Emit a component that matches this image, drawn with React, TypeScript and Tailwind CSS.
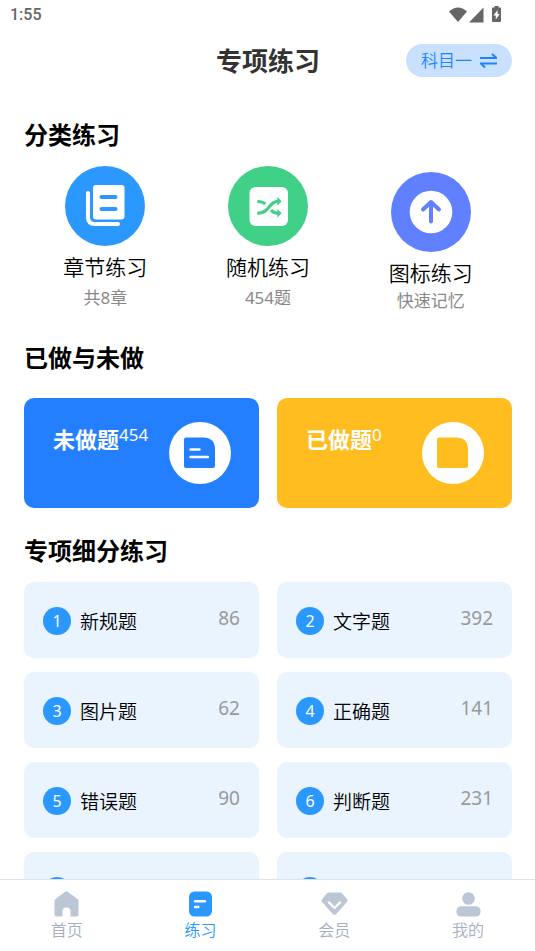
import type { ReactNode } from "react";

type Category = { title: string; note: string; noteClass: string; icon: ReactNode };
type Topic = { id: number; name?: string; count?: number };
type Tab = { label: string; active?: boolean; icon: ReactNode };

function ChapterIcon() {
  return (
    <svg viewBox="0 0 80 80" className="size-20" aria-hidden="true">
      <circle cx="40" cy="40" r="40" fill="#2b98ff" />
      <rect x="28" y="19" width="31.500" height="34.500" rx="3" fill="#fff" />
      <path d="M23 27v24q0 7 7 7h23" fill="none" stroke="#fff" strokeWidth="4" strokeLinecap="round" />
      <path d="M36.500 31h14M36.500 43h14" stroke="#2b98ff" strokeWidth="4" strokeLinecap="round" />
    </svg>
  );
}

function ShuffleIcon() {
  return (
    <svg viewBox="0 0 80 80" className="size-20" aria-hidden="true">
      <circle cx="40" cy="40" r="40" fill="#40d088" />
      <rect x="21.500" y="21" width="38.500" height="39" rx="6" fill="#fff" />
      <g fill="none" stroke="#40d088" strokeWidth="3.200">
        <path d="M29.300 35.500c4 0 5.800.3 8 2.500M29.300 47.300c13.500 0 10.500-12 20.700-12" />
        <path d="M43 44c2 2.300 3.500 3.300 7 3.300" />
      </g>
      <path d="M49.300 31l4.300 4.300-4.300 4.500zM49.300 43l4.300 4.300-4.300 4.500z" fill="#40d088" />
    </svg>
  );
}

function ArrowUpIcon() {
  return (
    <svg viewBox="0 0 80 80" className="size-20" aria-hidden="true">
      <circle cx="40" cy="40" r="40" fill="#6080ff" />
      <circle cx="40" cy="40" r="21.300" fill="#fff" />
      <path d="M40 49.500V31M32 37.500l8-7.500 8 7.500" fill="none" stroke="#6080ff" strokeWidth="4" strokeLinecap="round" strokeLinejoin="round" />
    </svg>
  );
}

function SheetIcon({ color, lines }: { color: string; lines?: boolean }) {
  return (
    <svg viewBox="0 0 62 62" className="size-[62px]" aria-hidden="true">
      <circle cx="31" cy="31" r="31" fill="#fff" />
      <path d="M17 15.500h17q12 0 12 12V44q0 2-2 2H17q-2 0-2-2V17.500q0-2 2-2z" fill={color} />
      {lines && <path d="M21.500 27.500h9M21.500 35h17.500" stroke="#fff" strokeWidth="2.400" strokeLinecap="round" />}
    </svg>
  );
}

const categories: Category[] = [
  { title: "章节练习", note: "共8章", noteClass: "leading-[30px]", icon: <ChapterIcon /> },
  { title: "随机练习", note: "454题", noteClass: "leading-[30px]", icon: <ShuffleIcon /> },
  { title: "图标练习", note: "快速记忆", noteClass: "leading-6", icon: <ArrowUpIcon /> },
];

const topics: Topic[] = [
  { id: 1, name: "新规题", count: 86 },
  { id: 2, name: "文字题", count: 392 },
  { id: 3, name: "图片题", count: 62 },
  { id: 4, name: "正确题", count: 141 },
  { id: 5, name: "错误题", count: 90 },
  { id: 6, name: "判断题", count: 231 },
  { id: 7 },
  { id: 8 },
];

const tabs: Tab[] = [
  {
    label: "首页",
    icon: (
      <path d="M12.300.800q1.200-.9 2.400 0L24.500 8q1 .8 1 2v13q0 2.500-2.500 2.500h-5.500v-5a4 4 0 0 0-8 0v5H4Q1.500 25.500 1.500 23V10q0-1.200 1-2z" fill="currentColor" />
    ),
  },
  {
    label: "练习",
    active: true,
    icon: (
      <>
        <rect x="2" y="0.500" width="23" height="25" rx="5.500" fill="currentColor" />
        <path d="M8 10.200h10M8 16h3.500" stroke="#fff" strokeWidth="2.400" strokeLinecap="round" />
      </>
    ),
  },
  {
    label: "会员",
    icon: (
      <>
        <path d="M8 1.500h11q1.300 0 2.200 1L26 8.300q1 1.300 0 2.600L15 23.200q-1.500 1.500-3 0L1 10.900q-1-1.300 0-2.600L5.800 2.500q.9-1 2.200-1z" fill="currentColor" />
        <path d="M8 11.500l5.500 5.500 5.500-5.500" fill="none" stroke="#fff" strokeWidth="2.400" strokeLinecap="round" strokeLinejoin="round" />
      </>
    ),
  },
  {
    label: "我的",
    icon: (
      <>
        <circle cx="13.500" cy="7.500" r="6.300" fill="currentColor" />
        <rect x="1.500" y="15.300" width="24" height="10.200" rx="4.500" fill="currentColor" />
      </>
    ),
  },
];

function SectionTitle({ children }: { children: ReactNode }) {
  return <h2 className="text-[24px] leading-8 font-bold text-black">{children}</h2>;
}

function StatusBar() {
  return (
    <div className="flex h-[30px] shrink-0 items-center justify-between pr-8 pl-[10px] text-[#666]">
      <span className="font-[Roboto,sans-serif] text-[16px] leading-8 font-medium">1:55</span>
      <svg viewBox="0 0 54 18" className="h-[18px] w-[54px]" fill="currentColor" aria-hidden="true">
        <path d="M0 5.500Q9-2.500 18 5.500L9 16z" />
        <path d="M34.500 1.500v15H20z" />
        <path d="M45.500 0h4v1.500h1.500q1 0 1 1V15q0 1-1 1h-7q-1 0-1-1V2.500q0-1 1-1h1.500z" />
        <path d="M48.500 4l-4 5.500h2.300v4l3.900-5.500h-2.200z" fill="#fff" />
      </svg>
    </div>
  );
}

export default function App() {
  return (
    <div className="flex h-screen flex-col bg-white font-['Noto_Sans','Noto_Sans_CJK_SC',sans-serif] font-[350]" lang="zh-CN">
      <StatusBar />
      <header className="grid shrink-0 grid-cols-3 items-center pt-[14px] pr-[23px] pl-6">
        <h1 className="col-start-2 text-center text-[26px] leading-8 font-bold text-[#333]">专项练习</h1>
        <button className="flex h-[33px] items-center gap-2 justify-self-end rounded-full bg-[#c9e0ff] px-[15px] text-[17px] text-[#1c84ff]">
          科目一
          <svg viewBox="0 0 17 16" className="h-4 w-[17px]" fill="none" stroke="currentColor" strokeWidth="2" aria-hidden="true">
            <path d="M0 5h16.500L12 1M17 10.500H.8l4.200 4" />
          </svg>
        </button>
      </header>

      <main className="min-h-0 flex-1 overflow-y-auto pt-[42px] pr-[23px] pb-4 pl-6 [scrollbar-width:none]">
        <section>
          <SectionTitle>分类练习</SectionTitle>
          <div className="mt-[15px] grid grid-cols-3 items-end">
            {categories.map((c) => (
              <button key={c.title} className="flex flex-col items-center">
                {c.icon}
                <span className="mt-[5px] text-[21px] leading-8 text-black">{c.title}</span>
                <span className={`text-[17px] font-normal text-[#888] ${c.noteClass}`}>{c.note}</span>
              </button>
            ))}
          </div>
        </section>

        <section className="mt-[29px]">
          <SectionTitle>已做与未做</SectionTitle>
          <div className="mt-6 grid grid-cols-2 gap-[18px] text-white">
            <button className="flex h-[110px] items-start justify-between rounded-[10px] bg-[#247fff] pt-6 pr-7 pl-[29px] text-left">
              <span className="mt-px flex items-start">
                <strong className="text-[22px] leading-8 font-bold">未做题</strong>
                <span className="text-[17px] leading-6 font-normal">454</span>
              </span>
              <SheetIcon color="#247fff" lines />
            </button>
            <button className="flex h-[110px] items-start justify-between rounded-[10px] bg-[#ffbd1f] pt-6 pr-7 pl-[29px] text-left">
              <span className="mt-px flex items-start">
                <strong className="text-[22px] leading-8 font-bold">已做题</strong>
                <span className="text-[17px] leading-6 font-normal">0</span>
              </span>
              <SheetIcon color="#ffbd1f" />
            </button>
          </div>
        </section>

        <section className="mt-[27px]">
          <SectionTitle>专项细分练习</SectionTitle>
          <div className="mt-[15px] grid grid-cols-2 gap-x-[18px] gap-y-[14px]">
            {topics.map((t) => (
              <button key={t.id} className="flex h-[76px] items-start rounded-[10px] bg-[#e9f4ff] px-[19px] pt-[25px] text-left text-[19px]">
                <span className="flex size-7 items-center justify-center rounded-full bg-[#2b98ff] text-[16px] font-normal text-white">{t.id}</span>
                <span className="ml-[9px] flex-1 leading-[30px] text-black">{t.name}</span>
                <span className="leading-[22px] font-normal text-[#999]">{t.count}</span>
              </button>
            ))}
          </div>
        </section>
      </main>

      <nav className="grid h-[72px] shrink-0 grid-cols-4 border-t border-[#dfe3e8] bg-white">
        {tabs.map((t) => (
          <a key={t.label} href="#" className={`flex flex-col items-center pt-[11px] ${t.active ? "text-[#2b98ff]" : "text-[#bbc7d5]"}`}>
            <svg viewBox="0 0 27 26" className="h-[26px] w-[27px]" aria-hidden="true">
              {t.icon}
            </svg>
            <span className={`text-[16px] leading-[26px] ${t.active ? "" : "text-[#a5afbf]"}`}>{t.label}</span>
          </a>
        ))}
      </nav>
    </div>
  );
}
